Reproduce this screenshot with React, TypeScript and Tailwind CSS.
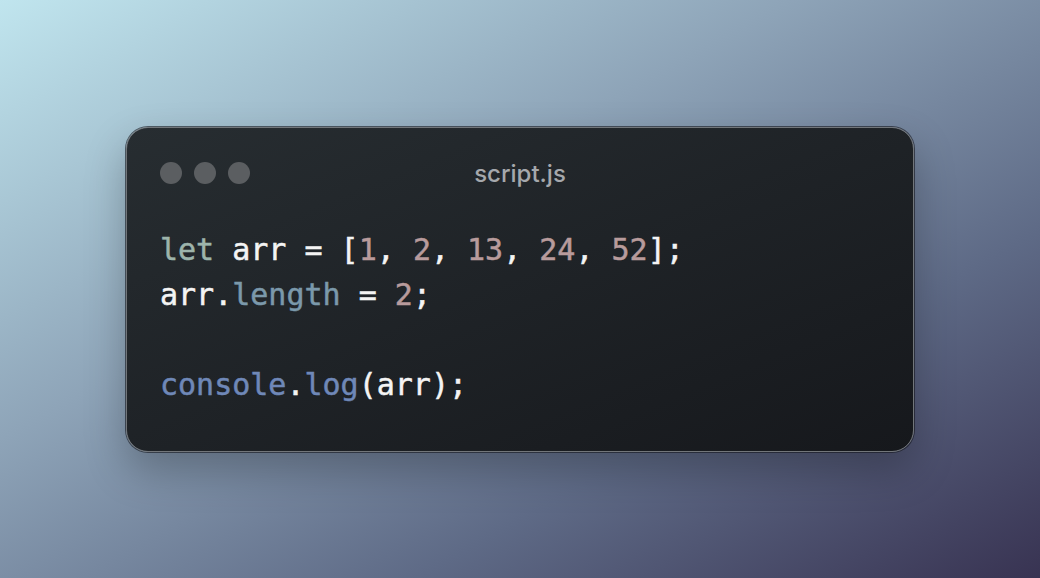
import React from "react";

const mono = { fontFamily: '"DejaVu Sans Mono", "Liberation Mono", monospace' };

export default function App() {
  return (
    <div className="w-[1040px] h-[578px] flex items-center justify-center bg-[linear-gradient(to_bottom_right,#c0e5ee_0%,#8ea4b8_38%,#5e6a86_70%,#383352_100%)]">
      <div className="w-[788px] h-[325px] rounded-[22px] border border-[#72767a] bg-[linear-gradient(to_bottom_right,#272d31,#16181c)] shadow-[0_0_0_1px_rgba(20,22,28,0.6),0_18px_40px_rgba(0,0,0,0.25)] relative pl-[33px] pt-[34px]">
        <div className="flex gap-3 h-[22px]">
          <div className="w-[22px] h-[22px] rounded-full bg-[#5b5e61]" />
          <div className="w-[22px] h-[22px] rounded-full bg-[#5b5e61]" />
          <div className="w-[22px] h-[22px] rounded-full bg-[#5b5e61]" />
        </div>
        <div
          className="absolute left-0 right-0 top-[31px] text-center text-[24px] leading-[30px] font-medium text-[#a5a8ac]"
          style={{ fontFamily: 'Inter, "Noto Sans", sans-serif' }}
        >
          script.js
        </div>
        <div className="mt-[43px] text-[30px] leading-[45px] text-[#f4f4f4] whitespace-pre [-webkit-text-stroke:0.5px_currentColor]" style={mono}>
          <div>
            <span className="text-[#9db4ab]">let</span> arr = [<span className="text-[#b89b9c]">1</span>, <span className="text-[#b89b9c]">2</span>, <span className="text-[#b89b9c]">13</span>, <span className="text-[#b89b9c]">24</span>, <span className="text-[#b89b9c]">52</span>];
          </div>
          <div>
            arr.<span className="text-[#7b99ab]">length</span> = <span className="text-[#b89b9c]">2</span>;
          </div>
          <div>{" "}</div>
          <div>
            <span className="text-[#6f88b8]">console</span>.<span className="text-[#6f88b8]">log</span>(arr);
          </div>
        </div>
      </div>
    </div>
  );
}
